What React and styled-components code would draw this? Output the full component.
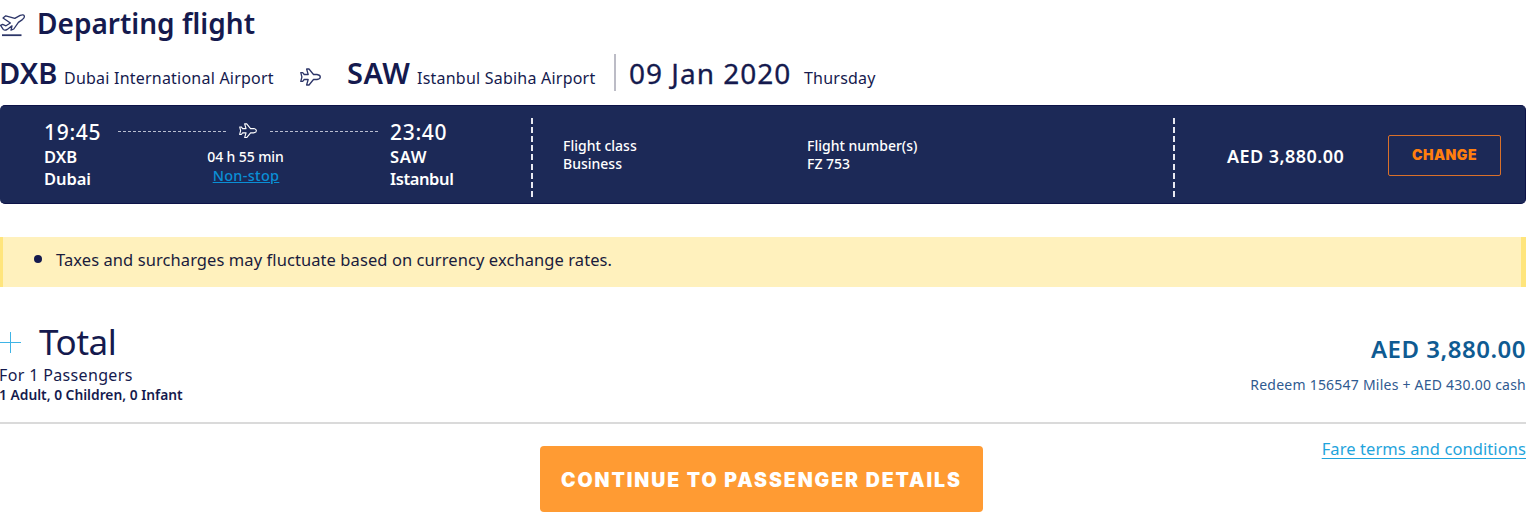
import React from 'react'
import styled, { createGlobalStyle } from 'styled-components'

const colors={
    navy: '#151a4e',
    icon: '#2c3568',
    panel: '#1c2957',
    orange: '#ff7f0e',
    cta: '#ff9b33',
    link: '#1fa4dc',
    price: '#0f5b92',
    white: '#fff',
}

const PlaneIcon=({size=21})=>(
    <svg width={size} height={size*18/21} viewBox="0 0 21 18" fill="none" stroke="currentColor" strokeWidth="1.3" strokeLinejoin="round">
        <path d="M13.5 6.5H17Q20.3 7 20.3 9T17 11.5H13.5L9 17H6.6L8.2 11.5H4.2L2.7 13.4H.8L1.9 9 .8 4.6H2.7L4.2 6.5H8.2L6.6 1H9Z"/>
    </svg>
)

const TakeoffIcon=()=>(
    <svg width="25" height="24" viewBox="0 0 25 24" fill="none" stroke={colors.icon} strokeWidth="1.3" strokeLinejoin="round">
        <path d="M.6 11.4L2.6 10.4 6 11.8 10.4 9 3 4 5.8 1.8 14.8 4.4 20.2 1.4Q23.8.2 24.3 2T22.4 5.6L18.4 8.4 13.8 15 11 16.2 12 11.8 7.2 15.4Q4.8 17 3.2 15.4Z"/>
        <path d="M2 21.2H21.5" strokeWidth="1.8"/>
    </svg>
)

const App=()=>(
    <>
    <GlobalStyle/>
    <Page>
        <Heading><TakeoffIcon/>Departing flight</Heading>
        <Route>
            <Code>DXB</Code>
            <Airport $width={236}>Dubai International Airport</Airport>
            <RouteIcon><PlaneIcon/></RouteIcon>
            <Code $spacing={0.5}>SAW</Code>
            <Airport $width={198}>Istanbul Sabiha Airport</Airport>
            <Separator/>
            <FlightDate>09 Jan 2020</FlightDate>
            <Airport>Thursday</Airport>
        </Route>
        <FlightCard>
            <Stop $width={74}>
                <Time>19:45</Time>
                <Place>DXB</Place>
                <Place $spacing={-0.1}>Dubai</Place>
            </Stop>
            <Journey>
                <Path><Dots/><PlaneIcon size={18}/><Dots/></Path>
                <Duration>04 h 55 min</Duration>
                <NonStop href="#">Non-stop</NonStop>
            </Journey>
            <Stop $width={141}>
                <Time>23:40</Time>
                <Place $spacing={0.6}>SAW</Place>
                <Place $spacing={-0.4}>Istanbul</Place>
            </Stop>
            <DashedLine/>
            <Detail $width={244}>Flight class<br/>Business</Detail>
            <Detail $width={366}>Flight number(s)<br/>FZ 753</Detail>
            <DashedLine/>
            <Fare>AED 3,880.00</Fare>
            <ChangeButton>CHANGE</ChangeButton>
        </FlightCard>
        <Notice>
            <Bullet/>
            Taxes and surcharges may fluctuate based on currency exchange rates.
        </Notice>
        <Summary>
            <div>
                <Total><Plus/>Total</Total>
                <Passengers>For 1 Passengers</Passengers>
                <Breakdown>1 Adult, 0 Children, 0 Infant</Breakdown>
            </div>
            <Amounts>
                <TotalPrice>AED 3,880.00</TotalPrice>
                <Redeem>Redeem 156547 Miles + AED 430.00 cash</Redeem>
            </Amounts>
        </Summary>
        <Footer>
            <ContinueButton>CONTINUE TO PASSENGER DETAILS</ContinueButton>
            <Terms href="#">Fare terms and conditions</Terms>
        </Footer>
    </Page>
    </>
)

export default App

const GlobalStyle=createGlobalStyle`
    *{
        box-sizing: border-box;
    }

    body{
        margin: 0;
        background: ${colors.white};
        overflow: hidden;
    }

    button{
        font-family: Inter, sans-serif;
        padding: 0;
        cursor: pointer;
    }
`

const Page=styled.div`
    width: 1526px;
    height: 522px;
    color: ${colors.navy};
    font-family: "Noto Sans", sans-serif;
    white-space: nowrap;
`

const Heading=styled.div`
    display: flex;
    align-items: center;
    gap: 12px;
    height: 46px;
    font-size: 28px;
    line-height: 46px;
    font-weight: 600;

    svg{
        margin-top: 6px;
    }
`

const Route=styled.div`
    display: flex;
    align-items: baseline;
    height: 59px;
    padding-top: 8px;
    line-height: 38px;
`

const Code=styled.div`
    width: ${(props)=>props.$spacing? 70:65}px;
    margin-left: ${(props)=>props.$spacing? 0:-1}px;
    font-size: 29px;
    font-weight: 600;
    letter-spacing: ${(props)=>props.$spacing||0}px;
`

const Airport=styled.div`
    width: ${(props)=>props.$width? `${props.$width}px`:'auto'};
    font-size: 16px;
    letter-spacing: 0.22px;
`

const RouteIcon=styled.div`
    display: flex;
    align-self: flex-start;
    width: 47px;
    padding-top: 14px;
    color: ${colors.icon};
`

const Separator=styled.div`
    align-self: flex-start;
    width: 2px;
    height: 37px;
    margin: 0 13px 0 -1px;
    background: #bcbcc6;
`

const FlightDate=styled.div`
    width: 175px;
    font-size: 28px;
    letter-spacing: 1px;
    -webkit-text-stroke: 0.3px currentColor;
`

const FlightCard=styled.div`
    display: flex;
    align-items: center;
    height: 99px;
    padding-left: 44px;
    border: 1px solid #0d1348;
    border-left: 0;
    border-radius: 5px;
    background: ${colors.panel};
    color: ${colors.white};
`

const Stop=styled.div`
    width: ${(props)=>props.$width}px;
`

const Time=styled.div`
    padding-bottom: 2px;
    font-size: 21px;
    line-height: 24px;
    font-weight: 500;
    letter-spacing: 0.7px;
`

const Place=styled.div`
    font-size: 16.5px;
    line-height: 22px;
    font-weight: 600;
    letter-spacing: ${(props)=>props.$spacing||0}px;
`

const Journey=styled.div`
    display: flex;
    flex-direction: column;
    align-items: center;
    width: 260px;
    margin: -3px 12px 0 0;
    line-height: 18px;
`

const Path=styled.div`
    display: flex;
    align-items: center;
    justify-content: space-between;
    align-self: stretch;
    height: 26px;
    padding-bottom: 8px;
`

const Dots=styled.div`
    width: 108px;
    border-top: 1px dashed #b9bed0;
`

const Duration=styled.div`
    margin-right: 5px;
    font-size: 14px;
    font-weight: 500;
    letter-spacing: -0.1px;
`

const NonStop=styled.a`
    margin-right: 4px;
    color: #0a8fd6;
    font-size: 14.5px;
    font-weight: 500;
    letter-spacing: 0.3px;
`

const DashedLine=styled.div`
    width: 2px;
    height: 79px;
    margin-top: 6px;
    background: repeating-linear-gradient(#e8e9f0 0 6px, transparent 6px 9.1px);
`

const Detail=styled.div`
    width: ${(props)=>props.$width}px;
    font-size: 14px;
    line-height: 18px;
    font-weight: 500;

    ${DashedLine} + &{
        margin-left: 30px;
    }
`

const Fare=styled.div`
    width: 161px;
    margin: 3px 0 0 52px;
    font-size: 18px;
    font-weight: 600;
    letter-spacing: 0.45px;
`

const ChangeButton=styled.button`
    width: 113px;
    height: 41px;
    margin-top: 2px;
    padding-bottom: 2px;
    border: 1px solid #d9702a;
    border-radius: 2px;
    background: transparent;
    color: ${colors.orange};
    font-size: 14px;
    font-weight: 900;
    letter-spacing: 0.5px;
`

const Notice=styled.div`
    display: flex;
    align-items: center;
    height: 50px;
    margin-top: 33px;
    padding-left: 31px;
    padding-bottom: 5px;
    border-left: 3px solid #ffe57c;
    border-right: 5px solid #ffe57c;
    background: #fff1bd;
    color: #1a1c3c;
    font-size: 16.5px;
    letter-spacing: 0.08px;
`

const Bullet=styled.div`
    width: 8px;
    height: 8px;
    margin: -2px 14px 0 0;
    border-radius: 50%;
    background: ${colors.navy};
`

const Summary=styled.div`
    display: flex;
    justify-content: space-between;
    height: 137px;
    padding-top: 31px;
    border-bottom: 2px solid #dadada;
`

const Total=styled.div`
    display: flex;
    align-items: center;
    gap: 18px;
    font-size: 35px;
    line-height: 47px;
    letter-spacing: -0.4px;
`

const Plus=styled.div`
    width: 21px;
    height: 21px;
    margin-top: 2px;
    background: linear-gradient(#3fb4e6, #3fb4e6) center / 21px 1px no-repeat,
        linear-gradient(#3fb4e6, #3fb4e6) center / 1px 21px no-repeat;
`

const Passengers=styled.div`
    margin-left: -1px;
    font-size: 16px;
    line-height: 20px;
    letter-spacing: 0.35px;
`

const Breakdown=styled.div`
    margin-left: -1px;
    font-size: 13.8px;
    line-height: 20px;
    font-weight: 600;
`

const Amounts=styled.div`
    padding-top: 11px;
    text-align: right;
    color: ${colors.price};
`

const TotalPrice=styled.div`
    font-size: 24px;
    line-height: 40px;
    font-weight: 600;
    letter-spacing: 0.5px;
`

const Redeem=styled.div`
    margin-top: 6px;
    color: #2f5a90;
    font-size: 14px;
    line-height: 20px;
    letter-spacing: 0.23px;
`

const Footer=styled.div`
    display: flex;
    justify-content: space-between;
    align-items: flex-start;
    padding: 22px 0 0 540px;
`

const ContinueButton=styled.button`
    width: 443px;
    height: 66px;
    padding-top: 1px;
    border: 0;
    border-radius: 4px;
    background: ${colors.cta};
    color: ${colors.white};
    font-size: 19.5px;
    font-weight: 900;
    letter-spacing: 1.9px;
`

const Terms=styled.a`
    margin-top: -9px;
    color: ${colors.link};
    font-size: 16.5px;
    line-height: 24px;
    letter-spacing: 0.08px;
    text-underline-offset: 3px;
`
